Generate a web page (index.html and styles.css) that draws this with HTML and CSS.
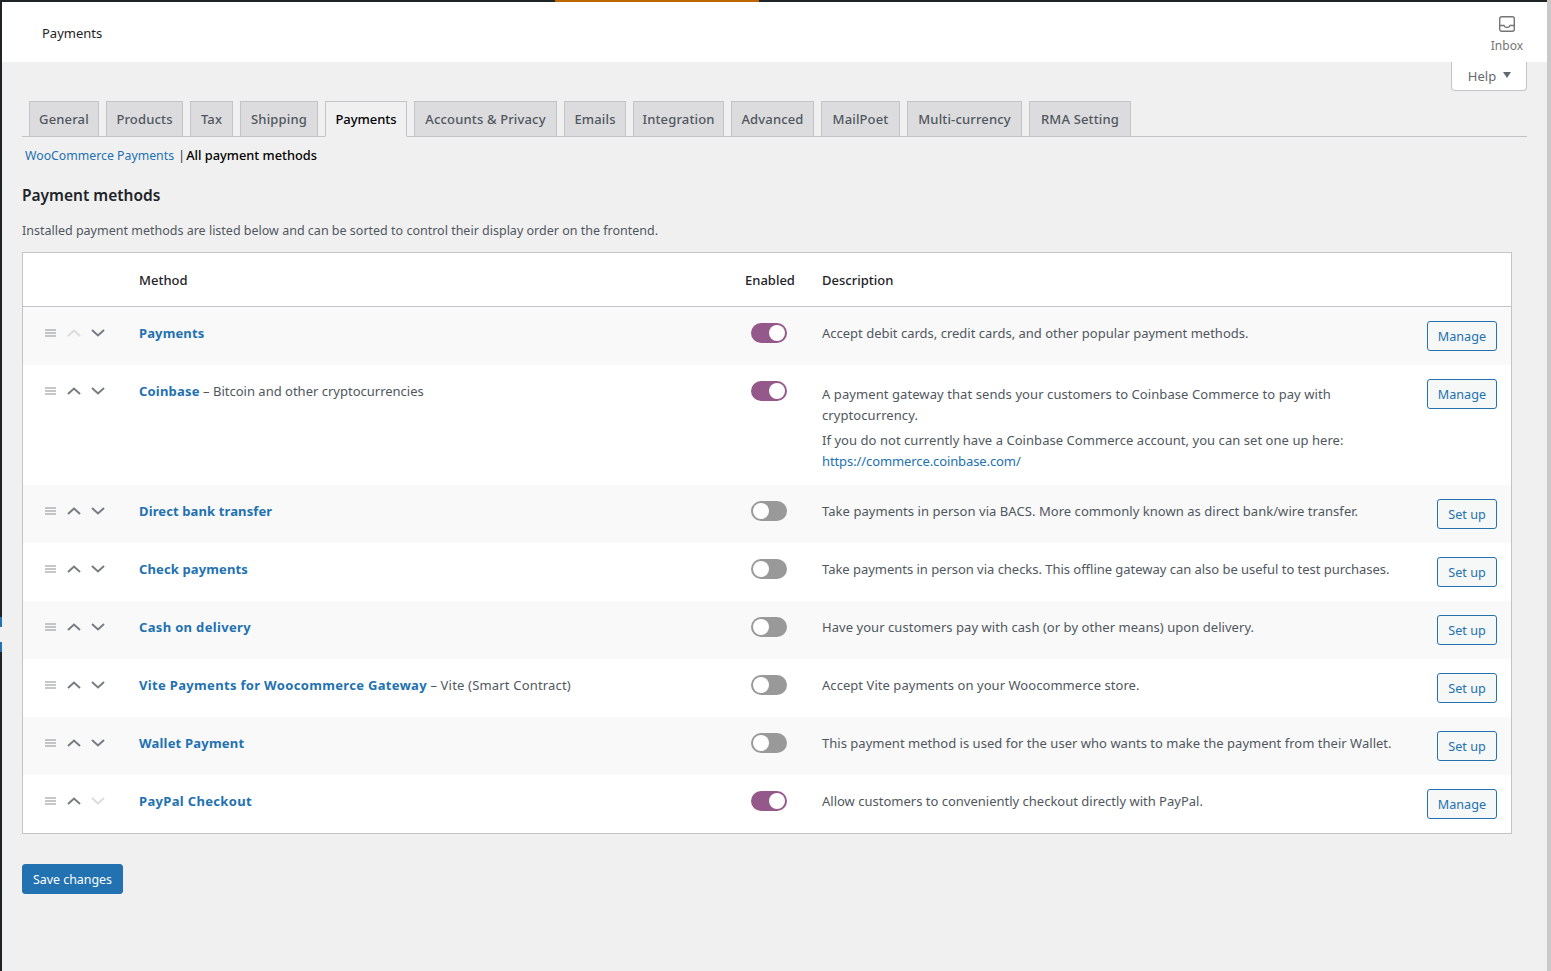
FILE: index.html
```html
<!DOCTYPE html>
<html lang="en">
<head>
<meta charset="utf-8">
<title>Payments</title>
<link rel="stylesheet" href="styles.css">
</head>
<body>
<div class="frame">
  <div class="side-strip"><span class="side-mark"></span></div>
  <div class="page">
    <div class="top-strip"><span class="top-mark"></span></div>
    <header class="header">
      <h1 class="header-title">Payments</h1>
      <a class="inbox">
        <svg class="inbox-icon" width="16" height="16" viewBox="0 0 16 16" fill="none" stroke="#757575" stroke-width="1.4"><rect x="0.7" y="0.7" width="14.6" height="14.6" rx="2"/><path d="M1 9.500h4c.5 1.500 1.500 2 3 2s2.500-.5 3-2h4"/></svg>
        <span>Inbox</span>
      </a>
    </header>
    <main class="content">
      <div class="help-row"><button class="help-tab">Help<span class="help-arrow"></span></button></div>
      <nav class="tabs">
        <a class="tab">General</a><a class="tab">Products</a><a class="tab">Tax</a><a class="tab">Shipping</a><a class="tab tab-active">Payments</a><a class="tab">Accounts &amp; Privacy</a><a class="tab">Emails</a><a class="tab">Integration</a><a class="tab">Advanced</a><a class="tab">MailPoet</a><a class="tab">Multi-currency</a><a class="tab">RMA Setting</a>
      </nav>
      <div class="subnav"><a class="link subnav-link">WooCommerce Payments</a><span class="subnav-sep">|</span><strong class="subnav-current">All payment methods</strong></div>
      <h2 class="section-title">Payment methods</h2>
      <p class="section-intro">Installed payment methods are listed below and can be sorted to control their display order on the frontend.</p>
      <div class="table-box">
      <table class="methods">
        <thead>
          <tr><th class="c-sort"></th><th class="c-name">Method</th><th class="c-status">Enabled</th><th class="c-desc">Description</th><th class="c-action"></th></tr>
        </thead>
        <tbody>
          <tr>
            <td class="c-sort"><div class="sorter"><svg class="i-drag" viewBox="0 0 11 8"><path d="M0 1h11M0 4h11M0 7h11"/></svg><svg class="i-chev is-off" viewBox="0 0 14 8"><path d="M1 7l6-5.500 6 5.500"/></svg><svg class="i-chev" viewBox="0 0 14 8"><path d="M1 1l6 5.500 6-5.500"/></svg></div></td>
            <td class="c-name"><a class="method narrow">Payments</a></td>
            <td class="c-status"><span class="toggle on"></span></td>
            <td class="c-desc">Accept debit cards, credit cards, and other popular payment methods.</td>
            <td class="c-action"><a class="btn">Manage</a></td>
          </tr>
          <tr>
            <td class="c-sort"><div class="sorter"><svg class="i-drag" viewBox="0 0 11 8"><path d="M0 1h11M0 4h11M0 7h11"/></svg><svg class="i-chev" viewBox="0 0 14 8"><path d="M1 7l6-5.500 6 5.500"/></svg><svg class="i-chev" viewBox="0 0 14 8"><path d="M1 1l6 5.500 6-5.500"/></svg></div></td>
            <td class="c-name"><a class="method">Coinbase</a> – Bitcoin and other cryptocurrencies</td>
            <td class="c-status"><span class="toggle on"></span></td>
            <td class="c-desc spread"><p class="desc-p">A payment gateway that sends your customers to Coinbase Commerce to pay with cryptocurrency.</p><p class="desc-p">If you do not currently have a Coinbase Commerce account, you can set one up here: <a class="link desc-url">https://commerce.coinbase.com/</a></p></td>
            <td class="c-action"><a class="btn">Manage</a></td>
          </tr>
          <tr>
            <td class="c-sort"><div class="sorter"><svg class="i-drag" viewBox="0 0 11 8"><path d="M0 1h11M0 4h11M0 7h11"/></svg><svg class="i-chev" viewBox="0 0 14 8"><path d="M1 7l6-5.500 6 5.500"/></svg><svg class="i-chev" viewBox="0 0 14 8"><path d="M1 1l6 5.500 6-5.500"/></svg></div></td>
            <td class="c-name"><a class="method narrow">Direct bank transfer</a></td>
            <td class="c-status"><span class="toggle"></span></td>
            <td class="c-desc spread">Take payments in person via BACS. More commonly known as direct bank/wire transfer.</td>
            <td class="c-action"><a class="btn">Set up</a></td>
          </tr>
          <tr>
            <td class="c-sort"><div class="sorter"><svg class="i-drag" viewBox="0 0 11 8"><path d="M0 1h11M0 4h11M0 7h11"/></svg><svg class="i-chev" viewBox="0 0 14 8"><path d="M1 7l6-5.500 6 5.500"/></svg><svg class="i-chev" viewBox="0 0 14 8"><path d="M1 1l6 5.500 6-5.500"/></svg></div></td>
            <td class="c-name"><a class="method narrow">Check payments</a></td>
            <td class="c-status"><span class="toggle"></span></td>
            <td class="c-desc tight">Take payments in person via checks. This offline gateway can also be useful to test purchases.</td>
            <td class="c-action"><a class="btn">Set up</a></td>
          </tr>
          <tr>
            <td class="c-sort"><div class="sorter"><svg class="i-drag" viewBox="0 0 11 8"><path d="M0 1h11M0 4h11M0 7h11"/></svg><svg class="i-chev" viewBox="0 0 14 8"><path d="M1 7l6-5.500 6 5.500"/></svg><svg class="i-chev" viewBox="0 0 14 8"><path d="M1 1l6 5.500 6-5.500"/></svg></div></td>
            <td class="c-name"><a class="method wide">Cash on delivery</a></td>
            <td class="c-status"><span class="toggle"></span></td>
            <td class="c-desc spread">Have your customers pay with cash (or by other means) upon delivery.</td>
            <td class="c-action"><a class="btn">Set up</a></td>
          </tr>
          <tr>
            <td class="c-sort"><div class="sorter"><svg class="i-drag" viewBox="0 0 11 8"><path d="M0 1h11M0 4h11M0 7h11"/></svg><svg class="i-chev" viewBox="0 0 14 8"><path d="M1 7l6-5.500 6 5.500"/></svg><svg class="i-chev" viewBox="0 0 14 8"><path d="M1 1l6 5.500 6-5.500"/></svg></div></td>
            <td class="c-name"><a class="method wide">Vite Payments for Woocommerce Gateway</a> <span class="suffix-wide">– Vite (Smart Contract)</span></td>
            <td class="c-status"><span class="toggle"></span></td>
            <td class="c-desc spread">Accept Vite payments on your Woocommerce store.</td>
            <td class="c-action"><a class="btn">Set up</a></td>
          </tr>
          <tr>
            <td class="c-sort"><div class="sorter"><svg class="i-drag" viewBox="0 0 11 8"><path d="M0 1h11M0 4h11M0 7h11"/></svg><svg class="i-chev" viewBox="0 0 14 8"><path d="M1 7l6-5.500 6 5.500"/></svg><svg class="i-chev" viewBox="0 0 14 8"><path d="M1 1l6 5.500 6-5.500"/></svg></div></td>
            <td class="c-name"><a class="method">Wallet Payment</a></td>
            <td class="c-status"><span class="toggle"></span></td>
            <td class="c-desc slight">This payment method is used for the user who wants to make the payment from their Wallet.</td>
            <td class="c-action"><a class="btn">Set up</a></td>
          </tr>
          <tr>
            <td class="c-sort"><div class="sorter"><svg class="i-drag" viewBox="0 0 11 8"><path d="M0 1h11M0 4h11M0 7h11"/></svg><svg class="i-chev" viewBox="0 0 14 8"><path d="M1 7l6-5.500 6 5.500"/></svg><svg class="i-chev is-off" viewBox="0 0 14 8"><path d="M1 1l6 5.500 6-5.500"/></svg></div></td>
            <td class="c-name"><a class="method wide">PayPal Checkout</a></td>
            <td class="c-status"><span class="toggle on"></span></td>
            <td class="c-desc">Allow customers to conveniently checkout directly with PayPal.</td>
            <td class="c-action"><a class="btn">Manage</a></td>
          </tr>
        </tbody>
      </table>
      </div>
      <button class="save">Save changes</button>
    </main>
  </div>
  <div class="scroll-strip"></div>
</div>
</body>
</html>
```
FILE: styles.css
```css
* { box-sizing: border-box; }
html, body { margin: 0; height: 100%; overflow: hidden; }
body { background: #f0f0f1; color: #50575e; font: 13px/21px "Noto Sans", "Open Sans", sans-serif; }
.frame { display: flex; height: 971px; }
.side-strip { width: 2px; background: #1d2327; padding-top: 617px; flex: none; }
.side-mark { display: block; width: 2px; height: 35px; background: linear-gradient(#2271b1 0 10px, #f0f0f1 10px 25px, #2271b1 25px); }
.page { flex: 1; min-width: 0; }
.scroll-strip { width: 4px; flex: none; background: #c9c9c9; }
.top-strip { height: 2px; background: #1d2327; padding-left: 553px; }
.top-mark { display: block; width: 204px; height: 2px; background: #bd6500; }
.header { height: 60px; background: #fff; display: flex; justify-content: space-between; align-items: center; padding: 3px 24px 0 40px; }
.header-title { margin: 0; font-size: 13px; font-weight: 400; color: #1e1e1e; }
.inbox { display: flex; flex-direction: column; align-items: center; color: #757575; font-size: 12px; line-height: 18px; gap: 5px; margin-top: 3px; }
.content { padding: 0 20px; }
.help-row { display: flex; justify-content: flex-end; }
.help-tab { height: 29px; width: 76px; padding: 0 0 0 1px; background: #fff; border: 1px solid #c3c4c7; border-top: 0; border-radius: 0 0 4px 4px; color: #646970; font: inherit; display: flex; align-items: center; justify-content: center; gap: 7px; }
.help-arrow { width: 0; height: 0; border: 4.5px solid transparent; border-top: 6px solid #646970; border-bottom: 0; margin-top: -2px; }
.tabs { display: grid; grid-template-columns: 70px 77px 43px 78px 82px 143px 62px 91px 83px 79px 115px 102px; gap: 7px; margin-top: 10px; height: 36px; padding-left: 7px; border-bottom: 1px solid #c3c4c7; }
.tab { height: 36px; background: #dcdcde; border: 1px solid #c3c4c7; color: #50575e; font-weight: 500; font-size: 13px; line-height: 34px; text-align: center; letter-spacing: .15px; white-space: nowrap; }
.tab-active { background: #f0f0f1; border-bottom-color: #f0f0f1; color: #000; letter-spacing: -.05px; }
.subnav { padding: 8px 0 0 3px; line-height: 21px; }
.link { color: #2271b1; }
.subnav-link { font-size: 12.3px; }
.subnav-sep { color: #3c434a; margin: 0 1px 0 4px; }
.subnav-current { color: #000; font-weight: 500; font-size: 12.8px; }
.section-title { margin: 17px 0 0; font-size: 15.5px; line-height: 24px; font-weight: 600; color: #1d2327; }
.section-intro { margin: 13px 0 0; font-size: 12.5px; }
.table-box { margin: 11px 15px 0 0; background: #fff; border: 1px solid #c3c4c7; }
.methods { width: 100%; border-collapse: separate; border-spacing: 0; table-layout: fixed; }
.methods th { height: 54px; padding: 2px 15px 0; text-align: left; font-weight: 500; color: #1d2327; border-bottom: 1px solid #c3c4c7; }
.methods td { padding: 16px 15px 13px; vertical-align: top; height: 58px; }
.methods tbody tr:nth-child(odd) td { background: #f9f9f9; }
.methods .c-sort { width: 101px; padding-left: 22px; padding-right: 0; }
.methods .c-name { width: 606px; }
.methods .c-status { width: 77px; }
.methods .c-action { width: 100px; padding-top: 14px; padding-left: 0; padding-right: 14px; text-align: right; }
.sorter { display: flex; align-items: center; height: 21px; gap: 10px; }
.i-drag { width: 11px; height: 8px; margin: -1px 1px 0 0; fill: none; stroke: #8c8f94; stroke-width: 1; }
.i-chev { width: 14px; height: 8px; fill: none; stroke: #787c82; stroke-width: 2; margin-top: -1px; }
.i-chev.is-off { stroke: #dcdcde; }
.toggle { display: block; position: relative; width: 36px; height: 20px; margin: 0 0 0 6px; border-radius: 10px; background: #999; }
.toggle::after { content: ""; position: absolute; left: 2px; top: 2px; width: 16px; height: 16px; border-radius: 50%; background: #fff; }
.toggle.on { background: #95588a; }
.toggle.on::after { left: 18px; }
.spread { letter-spacing: .05px; }
.slight { letter-spacing: .02px; }
.tight { letter-spacing: -.03px; }
.desc-url { letter-spacing: -.1px; }
.desc-p { margin: 3px 0 4px; }
.desc-p:first-child { letter-spacing: .08px; }
.desc-p + .desc-p { margin-bottom: 0; }
.method { color: #2271b1; font-weight: 700; letter-spacing: .2px; }
.method.narrow { letter-spacing: .12px; }
.method.wide { letter-spacing: .33px; }
.suffix-wide { letter-spacing: .18px; }
.btn { display: inline-block; height: 30px; min-width: 60px; padding: 0 10px; border: 1px solid #2271b1; border-radius: 3px; background: #f6f7f7; color: #2271b1; font-size: 12.6px; line-height: 30px; text-align: center; }
.save { display: block; margin-top: 30px; width: 101px; height: 30px; padding: 0; border: 1px solid #2271b1; border-radius: 3px; background: #2271b1; color: #fff; font: inherit; font-size: 12.4px; }
```
